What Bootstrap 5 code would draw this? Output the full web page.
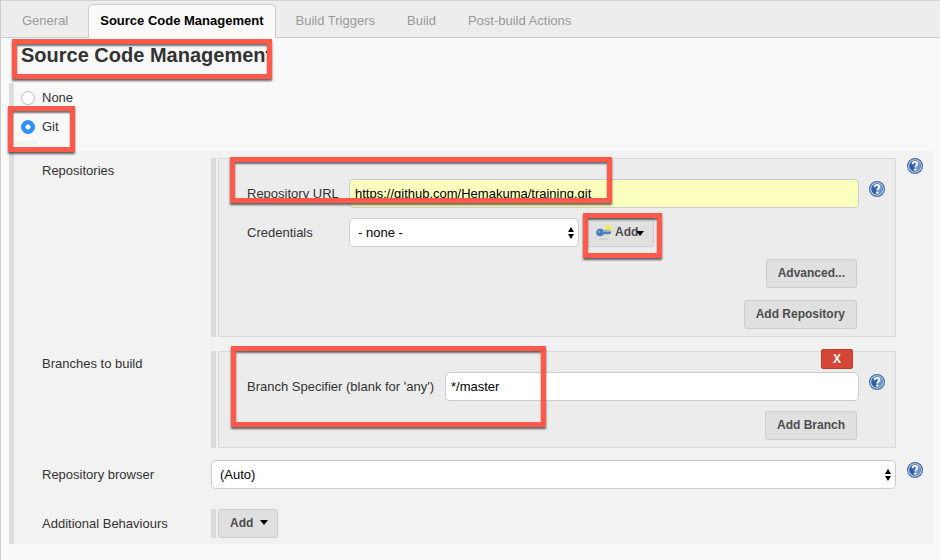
<!DOCTYPE html>
<html lang="en">
<head>
<meta charset="utf-8">
<meta name="viewport" content="width=device-width, initial-scale=1">
<title>Source Code Management</title>
<link href="https://cdn.jsdelivr.net/npm/bootstrap@5.3.0/dist/css/bootstrap.min.css" rel="stylesheet">
<style>
  body { font: 13px/20px "Liberation Sans", Arial, sans-serif; color: #333; background: #f9f9f9; }
  .config-page { border-left: 1px solid #ccc; border-top: 1px solid #d3d3cb; min-height: 100vh; }

  .config-tabs { background: #ededed; border-bottom: 1px solid #ccc; padding: 3px 5px 0; }
  .config-tabs .nav-link { color: #999; border: 0; padding: 7px 16px 6px; line-height: 20px; }
  .config-tabs .nav-link.active { color: #000; font-weight: bold; background: #f9f9f9; margin: 0 4px -1px; border: 1px solid #ccc; border-bottom: 0; border-radius: 5px 5px 0 0; padding: 6px 11px 7px; }

  .config-heading { font-size: 20px; line-height: 24px; font-weight: bold; padding: 5px 20px 16px; }
  .scm-section { margin: 0 6px 15px 8px; border-left: 5px solid #ddd; }
  .scm-choice { padding-left: 7px; height: 29px; gap: 7px; }
  .scm-choice .form-check-input { width: 14px; height: 14px; margin: 0; border-color: #bbb; box-shadow: none; }
  .scm-choice .form-check-input:checked { background: #2f90fb radial-gradient(circle, #fff 2px, transparent 3px); border-color: #2f90fb; }
  .scm-choices { padding-bottom: 6px; }
  .scm-choices::after { content: ""; display: block; width: 23px; height: 4px; background: #f2f2f2; }

  .scm-panel { background: #f2f2f2; padding: 7px 0 6px 28px; }
  .setting-label { width: 169px; flex: none; padding-top: 3px; }
  .setting-browser { margin-top: 12px; }
  .setting-extra { margin-top: 20px; }
  .setting-branches { margin-top: 14px; }
  .setting-browser .setting-label, .setting-extra .setting-label { padding-top: 5px; }
  .help-col { width: 38px; flex: none; }
  .field-help { width: 36px; flex: none; }
  .help-btn { display: block; margin: 0 auto; border: 0; background: none; padding: 0; line-height: 0; }
  .help-low { padding-top: 2px; }

  .repeat-bar { width: 5px; flex: none; background: #dadada; }
  .repeat-group { gap: 2px; }
  .repeat-box { background: #ececec; border: 1px solid #d9d9d9; padding: 20px 0 7px 28px; }
  .field-label { width: 102px; flex: none; padding-top: 5px; }
  .field-label-wide { width: 198px; flex: none; padding-top: 5px; }
  .actions { padding-right: 38px; }
  .gap-fields { gap: 10px; }
  .gap-actions { gap: 12px; }

  .scm-panel .form-control, .scm-panel .form-select { height: 29px; font-size: 13px; line-height: 19px; color: #000; border: 1px solid #ccc; border-radius: 4px; padding: 4px 5px; }
  .scm-panel .form-select { border-radius: 5px; padding: 4px 20px 4px 8px; background: #fff url("data:image/svg+xml,%3Csvg xmlns='http://www.w3.org/2000/svg' viewBox='0 0 6 12'%3E%3Cpath d='M3 0 6 5H0zM0 7h6L3 12z'/%3E%3C/svg%3E") no-repeat right 4px center / 6px 12px; }
  .scm-panel .url-field { background: #faffbd; }
  .scm-panel .credentials { width: 230px; flex: none; }

  .btn-config { height: 29px; font-size: 12px; font-weight: bold; line-height: 18px; color: #4d4d4d; background: #e0e0e0; border: 1px solid #ccc; border-radius: 3px; padding: 3px 11px 5px; }
  .btn-config .caret { border: 4px solid transparent; border-top: 5px solid #000; border-bottom: 0; display: inline-block; }
  .btn-more { gap: 7px; padding-right: 9px; }
  .btn-key { gap: 3px; padding: 3px 12px 5px 8px; }
  .btn-key .caret { position: absolute; right: 9px; top: 12px; }
  .btn-delete { position: absolute; top: -3px; right: 42px; width: 32px; height: 20px; padding: 0; font-size: 12px; font-weight: bold; line-height: 18px; color: #fff; background: #d54734; border: 1px solid #c03c2b; border-radius: 2px; }

  /* Callout frames drawn over the form */
  .callout { position: absolute; z-index: 5; pointer-events: none; border: 5px solid #ff594b; box-shadow: 0 2px 2px rgba(0,0,0,.6), inset 0 2px 2px rgba(0,0,0,.55); }
  .callout-heading { left: 11px; top: 1px; width: 260px; height: 40px; }
  .callout-git { left: -6px; top: -6px; width: 67px; height: 46px; }
  .callout-url { left: 11px; top: -2px; width: 382px; height: 46px; }
  .callout-add { left: -4px; top: -5px; width: 79px; height: 45px; }
  .callout-branch { left: 12px; top: -6px; width: 315px; height: 81px; }
</style>
<script src="https://cdn.jsdelivr.net/npm/bootstrap@5.3.0/dist/js/bootstrap.bundle.min.js"></script>
</head>
<body>
<svg class="d-none" aria-hidden="true">
  <symbol id="help" viewBox="0 0 16 16">
    <circle cx="8" cy="8" r="7.4" fill="#c9daf0" stroke="#4a6ea5" stroke-width="1.2"/>
    <circle cx="8" cy="8" r="5.8" fill="#2f5fa6"/>
    <path d="M8 2.2a5.8 5.8 0 0 1 0 11.6z" fill="#6f98cf"/>
    <path d="M5.6 6.2C5.7 3 10.5 3.3 10.3 6 10.2 7.6 8.2 7.7 8.1 9.4" fill="none" stroke="#fff" stroke-width="1.9"/>
    <circle cx="8.1" cy="11.6" r="1.2" fill="#fff"/>
  </symbol>
</svg>

<div class="config-page">
  <ul class="nav nav-tabs config-tabs">
    <li class="nav-item"><a class="nav-link" href="#general">General</a></li>
    <li class="nav-item"><a class="nav-link active" aria-current="page" href="#scm">Source Code Management</a></li>
    <li class="nav-item"><a class="nav-link" href="#triggers">Build Triggers</a></li>
    <li class="nav-item"><a class="nav-link" href="#build">Build</a></li>
    <li class="nav-item"><a class="nav-link" href="#post">Post-build Actions</a></li>
  </ul>

  <main id="scm">
    <div class="position-relative">
      <h1 class="config-heading m-0">Source Code Management</h1>
      <span class="callout callout-heading"></span>
    </div>

    <section class="scm-section">
      <div class="scm-choices">
        <div class="scm-choice d-flex align-items-center">
          <input class="form-check-input" type="radio" name="scm" id="scm-none">
          <label for="scm-none">None</label>
        </div>
        <div class="scm-choice d-flex align-items-center position-relative">
          <input class="form-check-input" type="radio" name="scm" id="scm-git" checked>
          <label for="scm-git">Git</label>
          <span class="callout callout-git"></span>
        </div>
      </div>

      <div class="scm-panel">
        <div class="d-flex align-items-start">
          <div class="setting-label">Repositories</div>
          <div class="repeat-group d-flex flex-fill">
            <div class="repeat-bar"></div>
            <div class="repeat-box position-relative d-flex flex-column gap-actions flex-fill">
              <div class="d-flex flex-column gap-fields">
                <div class="d-flex align-items-start">
                  <label class="field-label" for="repo-url">Repository URL</label>
                  <input class="form-control url-field flex-fill w-auto" id="repo-url" type="text" value="https://github.com/Hemakuma/training.git">
                  <div class="field-help help-low"><button class="help-btn" type="button" aria-label="Help for Repository URL"><svg width="16" height="16"><use href="#help"/></svg></button></div>
                </div>
                <div class="d-flex align-items-start">
                  <label class="field-label" for="credentials">Credentials</label>
                  <select class="form-select credentials" id="credentials"><option>- none -</option></select>
                  <div class="position-relative ms-2">
                    <button class="btn btn-config btn-key position-relative d-flex align-items-center" type="button">
                      <svg width="16" height="16" viewBox="0 0 16 16" aria-hidden="true">
                        <ellipse cx="8" cy="15" rx="5" ry="1" fill="#d0d0d0"/>
                        <circle cx="12.5" cy="4" r="3" fill="#f3e84c"/>
                        <path d="M0 8.5a4.2 4.2 0 0 1 7.5-2.3l7.5.5v2.8l-2 1-1-.8-1.5 1-1-.8H8A4.2 4.2 0 0 1 0 8.5z" fill="#4c7fbf"/>
                        <path d="M7 6.7 14.5 7v1L7 7.8z" fill="#9bbbe0"/>
                        <circle cx="3" cy="7.8" r="1.2" fill="#7fa6d8"/>
                      </svg>Add<span class="caret"></span>
                    </button>
                    <span class="callout callout-add"></span>
                  </div>
                </div>
              </div>
              <div class="actions d-flex flex-column align-items-end gap-actions">
                <button class="btn btn-config" type="button">Advanced...</button>
                <button class="btn btn-config" type="button">Add Repository</button>
              </div>
              <span class="callout callout-url"></span>
            </div>
          </div>
          <div class="help-col"><button class="help-btn" type="button" aria-label="Help for Repositories"><svg width="16" height="16"><use href="#help"/></svg></button></div>
        </div>

        <div class="d-flex align-items-start setting-branches">
          <div class="setting-label">Branches to build</div>
          <div class="repeat-group d-flex flex-fill">
            <div class="repeat-bar"></div>
            <div class="repeat-box position-relative d-flex flex-column gap-fields flex-fill">
              <button class="btn btn-delete" type="button">X</button>
              <div class="d-flex align-items-start">
                <label class="field-label-wide" for="branch">Branch Specifier (blank for 'any')</label>
                <input class="form-control flex-fill w-auto" id="branch" type="text" value="*/master">
                <div class="field-help help-low"><button class="help-btn" type="button" aria-label="Help for Branch Specifier"><svg width="16" height="16"><use href="#help"/></svg></button></div>
              </div>
              <div class="actions d-flex justify-content-end">
                <button class="btn btn-config" type="button">Add Branch</button>
              </div>
              <span class="callout callout-branch"></span>
            </div>
          </div>
          <div class="help-col"></div>
        </div>

        <div class="d-flex align-items-start setting-browser">
          <label class="setting-label" for="browser">Repository browser</label>
          <select class="form-select flex-fill w-auto" id="browser"><option>(Auto)</option></select>
          <div class="help-col help-low"><button class="help-btn" type="button" aria-label="Help for Repository browser"><svg width="16" height="16"><use href="#help"/></svg></button></div>
        </div>

        <div class="d-flex align-items-start setting-extra">
          <div class="setting-label">Additional Behaviours</div>
          <div class="repeat-group d-flex">
            <div class="repeat-bar"></div>
            <button class="btn btn-config btn-more d-flex align-items-center" type="button">Add<span class="caret"></span></button>
          </div>
        </div>
      </div>
    </section>
  </main>
</div>
</body>
</html>
